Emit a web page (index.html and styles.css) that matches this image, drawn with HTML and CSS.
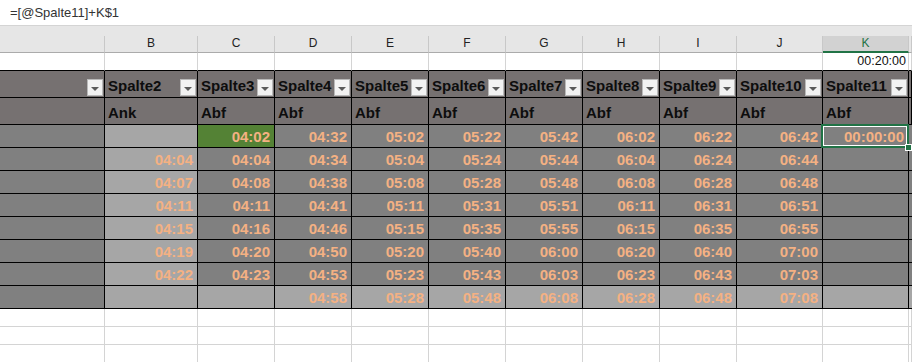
FILE: index.html
```
<!DOCTYPE html>
<html lang="de">
<head>
<meta charset="utf-8">
<title>Fahrplan</title>
<link rel="stylesheet" href="styles.css">
</head>
<body>
<div class="formula">=[@Spalte11]+K$1</div>
<div class="colband">
  <div class="row colheads">
    <div class="ch"></div><div class="ch">B</div><div class="ch">C</div><div class="ch">D</div><div class="ch">E</div><div class="ch">F</div><div class="ch">G</div><div class="ch">H</div><div class="ch">I</div><div class="ch">J</div><div class="ch ch-sel">K</div><div class="ch"></div>
  </div>
</div>
<div class="sheet">
  <div class="row r-plain r-top">
    <div class="c"></div><div class="c"></div><div class="c"></div><div class="c"></div><div class="c"></div><div class="c"></div><div class="c"></div><div class="c"></div><div class="c"></div><div class="c"></div><div class="c num-plain">00:20:00</div><div class="c"></div>
  </div>
  <div class="row r-head">
    <div class="h"><span></span><i class="dd"></i></div>
    <div class="h"><span>Spalte2</span><i class="dd"></i></div>
    <div class="h"><span>Spalte3</span><i class="dd"></i></div>
    <div class="h"><span>Spalte4</span><i class="dd"></i></div>
    <div class="h"><span>Spalte5</span><i class="dd"></i></div>
    <div class="h"><span>Spalte6</span><i class="dd"></i></div>
    <div class="h"><span>Spalte7</span><i class="dd"></i></div>
    <div class="h"><span>Spalte8</span><i class="dd"></i></div>
    <div class="h"><span>Spalte9</span><i class="dd"></i></div>
    <div class="h"><span>Spalte10</span><i class="dd"></i></div>
    <div class="h"><span>Spalte11</span><i class="dd"></i></div>
    <div class="h"></div>
  </div>
  <div class="row r-head">
    <div class="h"></div><div class="h"><span>Ank</span></div><div class="h"><span>Abf</span></div><div class="h"><span>Abf</span></div><div class="h"><span>Abf</span></div><div class="h"><span>Abf</span></div><div class="h"><span>Abf</span></div><div class="h"><span>Abf</span></div><div class="h"><span>Abf</span></div><div class="h"><span>Abf</span></div><div class="h"><span>Abf</span></div><div class="h"></div>
  </div>
  <div class="row r-data">
    <div class="d"></div><div class="d lt"></div><div class="d gr">04:02</div><div class="d">04:32</div><div class="d">05:02</div><div class="d">05:22</div><div class="d">05:42</div><div class="d">06:02</div><div class="d">06:22</div><div class="d">06:42</div><div class="d active">00:00:00<b class="handle"></b></div><div class="d"></div>
  </div>
  <div class="row r-data">
    <div class="d"></div><div class="d lt">04:04</div><div class="d">04:04</div><div class="d">04:34</div><div class="d">05:04</div><div class="d">05:24</div><div class="d">05:44</div><div class="d">06:04</div><div class="d">06:24</div><div class="d">06:44</div><div class="d"></div><div class="d"></div>
  </div>
  <div class="row r-data">
    <div class="d"></div><div class="d lt">04:07</div><div class="d">04:08</div><div class="d">04:38</div><div class="d">05:08</div><div class="d">05:28</div><div class="d">05:48</div><div class="d">06:08</div><div class="d">06:28</div><div class="d">06:48</div><div class="d"></div><div class="d"></div>
  </div>
  <div class="row r-data">
    <div class="d"></div><div class="d lt">04:11</div><div class="d">04:11</div><div class="d">04:41</div><div class="d">05:11</div><div class="d">05:31</div><div class="d">05:51</div><div class="d">06:11</div><div class="d">06:31</div><div class="d">06:51</div><div class="d"></div><div class="d"></div>
  </div>
  <div class="row r-data">
    <div class="d"></div><div class="d lt">04:15</div><div class="d">04:16</div><div class="d">04:46</div><div class="d">05:15</div><div class="d">05:35</div><div class="d">05:55</div><div class="d">06:15</div><div class="d">06:35</div><div class="d">06:55</div><div class="d"></div><div class="d"></div>
  </div>
  <div class="row r-data">
    <div class="d"></div><div class="d lt">04:19</div><div class="d">04:20</div><div class="d">04:50</div><div class="d">05:20</div><div class="d">05:40</div><div class="d">06:00</div><div class="d">06:20</div><div class="d">06:40</div><div class="d">07:00</div><div class="d"></div><div class="d"></div>
  </div>
  <div class="row r-data">
    <div class="d"></div><div class="d lt">04:22</div><div class="d">04:23</div><div class="d">04:53</div><div class="d">05:23</div><div class="d">05:43</div><div class="d">06:03</div><div class="d">06:23</div><div class="d">06:43</div><div class="d">07:03</div><div class="d"></div><div class="d"></div>
  </div>
  <div class="row r-data">
    <div class="d"></div><div class="d lt"></div><div class="d lt"></div><div class="d lt">04:58</div><div class="d lt">05:28</div><div class="d lt">05:48</div><div class="d lt">06:08</div><div class="d lt">06:28</div><div class="d lt">06:48</div><div class="d lt">07:08</div><div class="d lt"></div><div class="d lt"></div>
  </div>
  <div class="row r-plain">
    <div class="c"></div><div class="c"></div><div class="c"></div><div class="c"></div><div class="c"></div><div class="c"></div><div class="c"></div><div class="c"></div><div class="c"></div><div class="c"></div><div class="c"></div><div class="c"></div>
  </div>
  <div class="row r-plain">
    <div class="c"></div><div class="c"></div><div class="c"></div><div class="c"></div><div class="c"></div><div class="c"></div><div class="c"></div><div class="c"></div><div class="c"></div><div class="c"></div><div class="c"></div><div class="c"></div>
  </div>
  <div class="row r-plain">
    <div class="c"></div><div class="c"></div><div class="c"></div><div class="c"></div><div class="c"></div><div class="c"></div><div class="c"></div><div class="c"></div><div class="c"></div><div class="c"></div><div class="c"></div><div class="c"></div>
  </div>
</div>
</body>
</html>
```
FILE: styles.css
```
* { box-sizing: border-box; }
html, body { margin: 0; padding: 0; background: #fff; }
body { width: 912px; height: 362px; overflow: hidden; font-family: "Liberation Sans", Arial, sans-serif; }

.formula {
  height: 26px;
  padding: 4px 0 0 10px;
  font-size: 13px;
  color: #333;
  border-bottom: 1px solid #d4d4d4;
  line-height: 17px;
}

.row {
  display: grid;
  grid-template-columns: 105px 93px repeat(7, 77px) 86px 86px 1fr;
}

.colband {
  background: #e6e6e6;
  padding-top: 10px;
}
.colheads { height: 17px; }
.ch {
  border-right: 1px solid #c8c8c8;
  border-bottom: 1px solid #ababab;
  font-size: 12px;
  color: #222;
  text-align: center;
  line-height: 15px;
}
.ch-sel {
  background: #d2d2d2;
  color: #217346;
  border-bottom: 2px solid #217346;
}

.r-plain { height: 18px; }
.c {
  border-right: 1px solid #d4d4d4;
  border-bottom: 1px solid #d4d4d4;
}
.r-top .c { border-bottom-color: #000; }
.num-plain {
  font-size: 12.5px;
  color: #111;
  text-align: right;
  padding-right: 2px;
  line-height: 17px;
}

.r-head { height: 27px; }
.h {
  background: #767171;
  border-right: 1px solid #000;
  border-bottom: 1px solid #000;
  display: flex;
  align-items: flex-end;
  justify-content: space-between;
  font-size: 15px;
  font-weight: bold;
  color: #0d0d0d;
  line-height: 17px;
  overflow: hidden;
  white-space: nowrap;
}
.h span { padding: 0 0 3px 3px; }
.dd {
  flex: none;
  width: 16px;
  height: 17px;
  margin: 0 1px 1px 0;
  background: #f2f2f2;
  border: 1px solid #b9b9b9;
  display: flex;
  align-items: center;
  justify-content: center;
}
.dd::after {
  content: "";
  border-left: 4px solid transparent;
  border-right: 4px solid transparent;
  border-top: 4px solid #5a5a5a;
  margin-top: 2px;
}

.r-data { height: 23px; }
.d {
  position: relative;
  background: #808080;
  border-right: 1px solid #000;
  border-bottom: 1px solid #000;
  font-size: 15px;
  font-weight: bold;
  color: #f4b183;
  text-align: right;
  padding: 3px 4px 0 0;
  line-height: 17px;
}
.d.lt { background: #a6a6a6; }
.d.gr { background: #548235; }
.active::before {
  content: "";
  position: absolute;
  left: -2px; top: -1px; right: -1px; bottom: -1px;
  border: 2px solid #217346;
  box-shadow: inset 0 0 0 1px #fff;
}
.handle {
  position: absolute;
  right: -4px;
  bottom: -4px;
  width: 7px;
  height: 7px;
  background: #217346;
  border: 1px solid #fff;
  z-index: 2;
}
```
